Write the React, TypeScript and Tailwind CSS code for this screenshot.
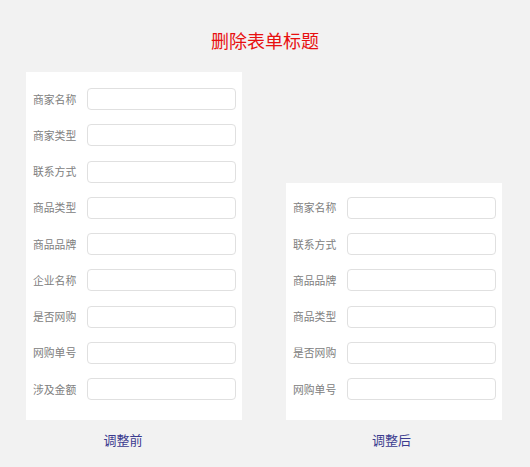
const leftFields = ['商家名称', '商家类型', '联系方式', '商品类型', '商品品牌', '企业名称', '是否网购', '网购单号', '涉及金额']
const rightFields = ['商家名称', '联系方式', '商品品牌', '商品类型', '是否网购', '网购单号']

function Row({ label }: { label: string }) {
  return (
    <div className="flex h-[22px] items-center">
      <label className="w-[54px] text-[10.8px] leading-none text-[#808080]">{label}</label>
      <input className="h-[22px] w-[149px] rounded-[4px] border border-[#e0e0e0] bg-white px-2 text-[11px] outline-none" />
    </div>
  )
}

function FormCard({ fields, top, caption, captionPad }: { fields: string[]; top: string; caption: string; captionPad: string }) {
  return (
    <div className="flex w-[216px] flex-col">
      <div className={`flex flex-col gap-[14.25px] bg-white pb-5 pl-[7px] ${top}`}>
        {fields.map((f) => (
          <Row key={f} label={f} />
        ))}
      </div>
      <div className={`mt-[10px] text-center text-[13px] leading-[20px] text-[#3b3b8f] ${captionPad}`}>{caption}</div>
    </div>
  )
}

export default function App() {
  return (
    <div
      className="h-[467px] w-[530px] bg-[#f2f2f2]"
      style={{ fontFamily: '"Microsoft YaHei", "Noto Sans CJK SC", "Noto Sans", sans-serif' }}
    >
      <h1 className="pt-[28px] text-center text-[18px] leading-[24px] text-[#e81010]">删除表单标题</h1>
      <div className="mt-5 flex items-end gap-[44px] pl-[26px]">
        <FormCard fields={leftFields} top="pt-4" caption="调整前" captionPad="pr-[22px]" />
        <FormCard fields={rightFields} top="pt-[14px]" caption="调整后" captionPad="pr-[5px]" />
      </div>
    </div>
  )
}
